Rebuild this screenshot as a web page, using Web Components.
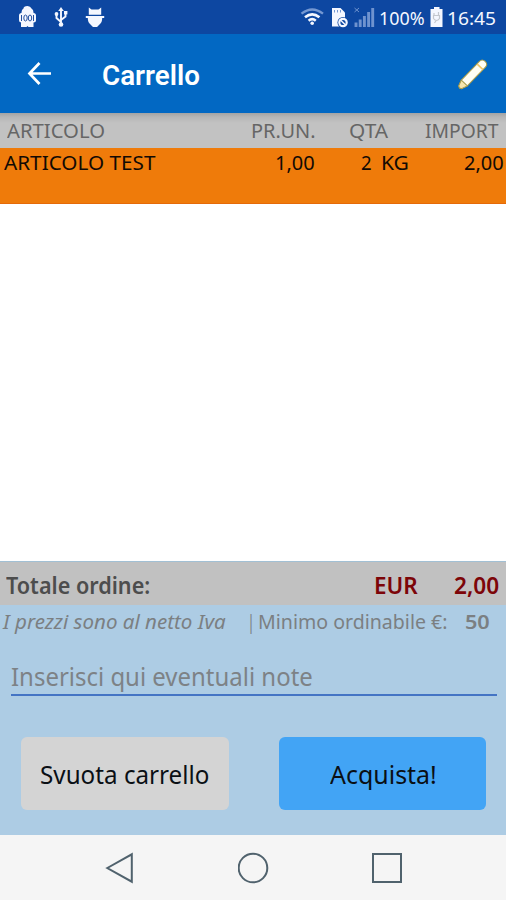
<!DOCTYPE html>
<html lang="it">
<head>
<meta charset="utf-8">
<title>Carrello</title>
<style>
    body {
        margin: 0;
        font-family: "Noto Sans", sans-serif;
    }
</style>
</head>
<body>
<cart-screen></cart-screen>

<script>
// text squeezed to a given width, used for all the labels
class FitText extends HTMLElement{
    constructor(){
        super();
        this.attachShadow({mode : 'open'});
        this.shadowRoot.innerHTML = `
        <style>
            :host {
                display: block;
                flex: none;
                white-space: nowrap;
            }
            span {
                display: block;
                width: max-content;
                transform-origin: 0 0;
            }
        </style>
        <span><slot></slot></span>
        `;
    }
    connectedCallback(){
        const width = Number(this.getAttribute('width'));
        const style = getComputedStyle(this);
        const ctx = document.createElement('canvas').getContext('2d');
        ctx.font = `${style.fontStyle} ${style.fontWeight} ${style.fontSize} ${style.fontFamily}`;
        const m = ctx.measureText(this.textContent);
        const scale = width / (m.actualBoundingBoxLeft + m.actualBoundingBoxRight);
        this.style.width = width + 'px';
        this.shadowRoot.querySelector('span').style.transform =
            `scaleX(${scale}) translateX(${m.actualBoundingBoxLeft}px)`;
    }
}

class StatusBar extends HTMLElement{
    constructor(){
        super();
        this.attachShadow({mode : 'open'});
        this.shadowRoot.innerHTML = `
        <style>
            :host {
                display: flex;
                height: 34px;
                background: #0d47a1;
                color: #f4f7ff;
                font-size: 17.500px;
                line-height: 36px;
            }
            svg {
                display: block;
                flex: none;
            }
            .time {
                margin-left: 4px;
            }
        </style>
        <svg width="120" height="34" fill="#f4f7ff">
            <path d="M21.500 12.500q0-3 2-4q0-2.500 4-2.500q3 0 4 2.500q2 1 2 4v1h-12z"/>
            <rect x="19" y="13" width="17" height="9.500" rx="2.500"/>
            <path d="M21 21h12.500v6h-5l-1-1l-1 1h-5.500z"/>
            <g fill="none" stroke="#24509f" stroke-width="1">
                <path d="M21.500 15v6M33.500 15v6"/>
                <ellipse cx="25.500" cy="18" rx="1.700" ry="3"/>
                <ellipse cx="30" cy="18" rx="1.700" ry="3"/>
            </g>
            <path d="M61 7l2.800 4h-5.600z"/>
            <circle cx="61" cy="24.500" r="2.300"/>
            <path d="M61 9v15M61 22l-4.500-4v-4M61 20l4.500-3.500v-4" fill="none" stroke="#f4f7ff" stroke-width="1.900"/>
            <circle cx="56.500" cy="14" r="1.900"/>
            <rect x="64" y="11" width="3.400" height="3.400"/>
            <path d="M88.800 14.800v-7.300l2.700 2h7l2.700-2v7.300z"/>
            <path d="M85.800 16h18.400v2h-2q0 4.500-2.700 6.500l-2.500 2.500h-4l-2.500-2.500q-2.700-2-2.700-6.500h-2z"/>
        </svg>
        <svg width="260" height="34" fill="none" stroke="#f4f7ff">
            <path d="M181.500 13.700q10.700-8.500 21.500 0" stroke="#7598d2" stroke-width="2.300"/>
            <path d="M185 17.300q7.200-6 14.400 0M188.600 20.700q3.600-3 7.200 0" stroke-width="2.600"/>
            <circle cx="192.200" cy="23.300" r="1.800" fill="#f4f7ff" stroke="none"/>
            <path d="M212 8h8.500l4.500 4.500v14h-13z" fill="#f4f7ff" stroke="none"/>
            <path d="M214.500 10v2.500M217.500 10v2.500M220.500 10v2.500" stroke="#7598d2"/>
            <circle cx="223" cy="22.500" r="5.500" fill="#0d47a1" stroke="none"/>
            <circle cx="223" cy="22.500" r="3.700" stroke-width="2.200"/>
            <path d="M220.500 20l5 5" stroke-width="1.500"/>
            <g stroke="#6f93cf">
                <path d="M234.500 8l4.500 4M239 8l-4.500 4" stroke-width="1"/>
                <path d="M236 27v-4.500M240.200 27v-7.500M244.400 27v-11M248.600 27v-15M252.700 27v-19" stroke-width="2.900"/>
            </g>
        </svg>
        <fit-text width="44">100%</fit-text>
        <svg width="20" height="34">
            <path d="M6.500 9h3.500v-2h5.500v2h3v18h-12z" fill="#f4f7ff"/>
            <path d="M10 13v2.500M14.500 12v3M9.500 15.500h6v3q-3 4-6 0zM12.500 20l-2 3" fill="none" stroke="#c3c7ce" stroke-width="1.200"/>
        </svg>
        <fit-text class="time" width="48">16:45</fit-text>
        `;
    }
}

class AppBar extends HTMLElement{
    constructor(){
        super();
        this.attachShadow({mode : 'open'});
        this.shadowRoot.innerHTML = `
        <style>
            :host {
                display: flex;
                align-items: center;
                height: 79px;
                background: #0268c3;
                color: #fff;
                font: 600 28px/40px Roboto, sans-serif;
            }
            svg {
                flex: none;
            }
            fit-text {
                padding-top: 5px;
            }
            .back {
                margin: 0 51px 0 26px;
            }
            .edit {
                margin-left: auto;
                margin-right: 16px;
            }
        </style>
        <svg class="back" width="26" height="26" fill="none" stroke="#fff" stroke-width="2.700">
            <path d="M25 12.500H4M13.500 2L3.500 12.500L13.500 23"/>
        </svg>
        <fit-text width="96">Carrello</fit-text>
        <svg class="edit" width="34" height="34">
            <g transform="translate(3.500 31) rotate(-46)" stroke="#a69a4a" stroke-width="1" stroke-linejoin="round">
                <path d="M0 0L1-2L7-4.200H33q4 0 4 4.200t-4 4.200H7L1 2z" fill="#fffef4"/>
                <path d="M0 0L1-2L7-4.200V4.200L1 2z" fill="#f8e6ae"/>
                <path d="M29.500-3.800V3.800" stroke="#f0c666" stroke-width="1.600"/>
            </g>
        </svg>
        `;
    }
}

class CartTable extends HTMLElement{
    constructor(){
        super();
        this.attachShadow({mode : 'open'});
        this.shadowRoot.innerHTML = `
        <style>
            :host {
                display: block;
                height: 448px;
                background: #fff;
                font-size: 20.500px;
            }
            .row {
                display: grid;
                grid-template-columns: 240px 76px 93px 1fr;
            }
            .row > div {
                display: flex;
                justify-content: flex-end;
            }
            .row > div:first-child {
                justify-content: flex-start;
            }
            .head {
                height: 35px;
                line-height: 35px;
                color: #666;
                background: linear-gradient(#a4a4a4, #b6b6b6 4px, #c2c2c2 10px);
            }
            .item {
                box-sizing: border-box;
                height: 56px;
                line-height: 28px;
                color: #120a04;
                background: #ef7b0a;
                border-bottom: 1px solid #e56a08;
            }
        </style>
        <div class="row head">
            <div style="padding-left:7px"><fit-text width="97">ARTICOLO</fit-text></div>
            <div style="padding-right:1px"><fit-text width="63">PR.UN.</fit-text></div>
            <div style="padding-right:20px"><fit-text width="39">QTA</fit-text></div>
            <div style="padding-right:7px"><fit-text width="74">IMPORT</fit-text></div>
        </div>
        <div class="row item">
            <div style="padding-left:4px"><fit-text width="152">ARTICOLO TEST</fit-text></div>
            <div style="padding-right:2px"><fit-text width="38">1,00</fit-text></div>
            <div style="padding-right:1px;gap:11px"><fit-text width="10">2</fit-text><fit-text width="26">KG</fit-text></div>
            <div style="padding-right:3px"><fit-text width="39">2,00</fit-text></div>
        </div>
        `;
    }
}

class CartSummary extends HTMLElement{
    constructor(){
        super();
        this.attachShadow({mode : 'open'});
        this.shadowRoot.innerHTML = `
        <style>
            :host {
                display: flex;
                flex-direction: column;
                box-sizing: border-box;
                height: 274px;
                border-top: 1px solid #a2c0d4;
                background: #adcce4;
            }
            .total {
                display: flex;
                height: 43px;
                padding: 0 7px 0 6px;
                background: #c1c1c1;
                color: #4d4d4d;
                font-size: 23px;
                font-weight: 600;
                line-height: 46px;
            }
            .total .currency {
                margin: 0 36px 0 auto;
            }
            .money {
                color: #7d0508;
            }
            .info {
                display: flex;
                height: 34px;
                padding: 0 17px 0 2px;
                color: #7b7f82;
                font-size: 20.500px;
                line-height: 33px;
            }
            .notes {
                height: 37px;
                margin: 18px 9px 0 11px;
                border-bottom: 2px solid #4474c4;
                color: #7d8286;
                font-size: 24.500px;
                line-height: 39px;
            }
            .buttons {
                display: flex;
                gap: 50px;
                margin: 41px 20px 0 21px;
            }
        </style>
        <div class="total">
            <fit-text width="143">Totale ordine:</fit-text>
            <fit-text class="money currency" width="42">EUR</fit-text>
            <fit-text class="money" width="45">2,00</fit-text>
        </div>
        <div class="info">
            <fit-text width="224" style="font-style:italic">I prezzi sono al netto Iva</fit-text>
            <fit-text width="2" style="margin-left:24px">|</fit-text>
            <fit-text width="188" style="margin-left:7px">Minimo ordinabile €:</fit-text>
            <fit-text width="23" style="margin-left:auto;font-weight:600">50</fit-text>
        </div>
        <div class="notes"><fit-text width="301">Inserisci qui eventuali note</fit-text></div>
        <div class="buttons">
            <cart-button label="Svuota carrello" size="168"></cart-button>
            <cart-button label="Acquista!" size="105" style="--fill:#42a4f5"></cart-button>
        </div>
        `;
    }
}

class CartButton extends HTMLElement{
    constructor(){
        super();
        this.attachShadow({mode : 'open'});
    }
    connectedCallback(){
        this.shadowRoot.innerHTML = `
        <style>
            :host {
                display: flex;
                flex: 1;
                justify-content: center;
                height: 73px;
                border-radius: 6px;
                background: var(--fill, #d4d4d4);
                color: #0a0f14;
                font-size: 25.500px;
                line-height: 74px;
            }
        </style>
        <fit-text width="${this.getAttribute('size')}">${this.getAttribute('label')}</fit-text>
        `;
    }
}

class NavBar extends HTMLElement{
    constructor(){
        super();
        this.attachShadow({mode : 'open'});
        this.shadowRoot.innerHTML = `
        <style>
            :host {
                display: flex;
                justify-content: space-between;
                box-sizing: border-box;
                height: 65px;
                padding: 17px 103px 0 104px;
                background: #f5f5f5;
            }
            svg {
                fill: none;
                stroke: #50626d;
                stroke-width: 2;
            }
        </style>
        <svg width="32" height="32"><path d="M3.300 16L27.800 2.300V29.700z"/></svg>
        <svg width="32" height="32"><circle cx="15" cy="16" r="14.300"/></svg>
        <svg width="32" height="32"><rect x="2" y="2" width="28" height="28"/></svg>
        `;
    }
}

class CartScreen extends HTMLElement{
    constructor(){
        super();
        this.attachShadow({mode : 'open'});
        this.shadowRoot.innerHTML = `
        <style>
            :host {
                display: flex;
                flex-direction: column;
                width: 506px;
                height: 900px;
                overflow: hidden;
            }
        </style>
        <status-bar></status-bar>
        <app-bar></app-bar>
        <cart-table></cart-table>
        <cart-summary></cart-summary>
        <nav-bar></nav-bar>
        `;
    }
}

window.customElements.define("fit-text",FitText);
window.customElements.define("status-bar",StatusBar);
window.customElements.define("app-bar",AppBar);
window.customElements.define("cart-table",CartTable);
window.customElements.define("cart-button",CartButton);
window.customElements.define("cart-summary",CartSummary);
window.customElements.define("nav-bar",NavBar);
window.customElements.define("cart-screen",CartScreen);
</script>
</body>
</html>
